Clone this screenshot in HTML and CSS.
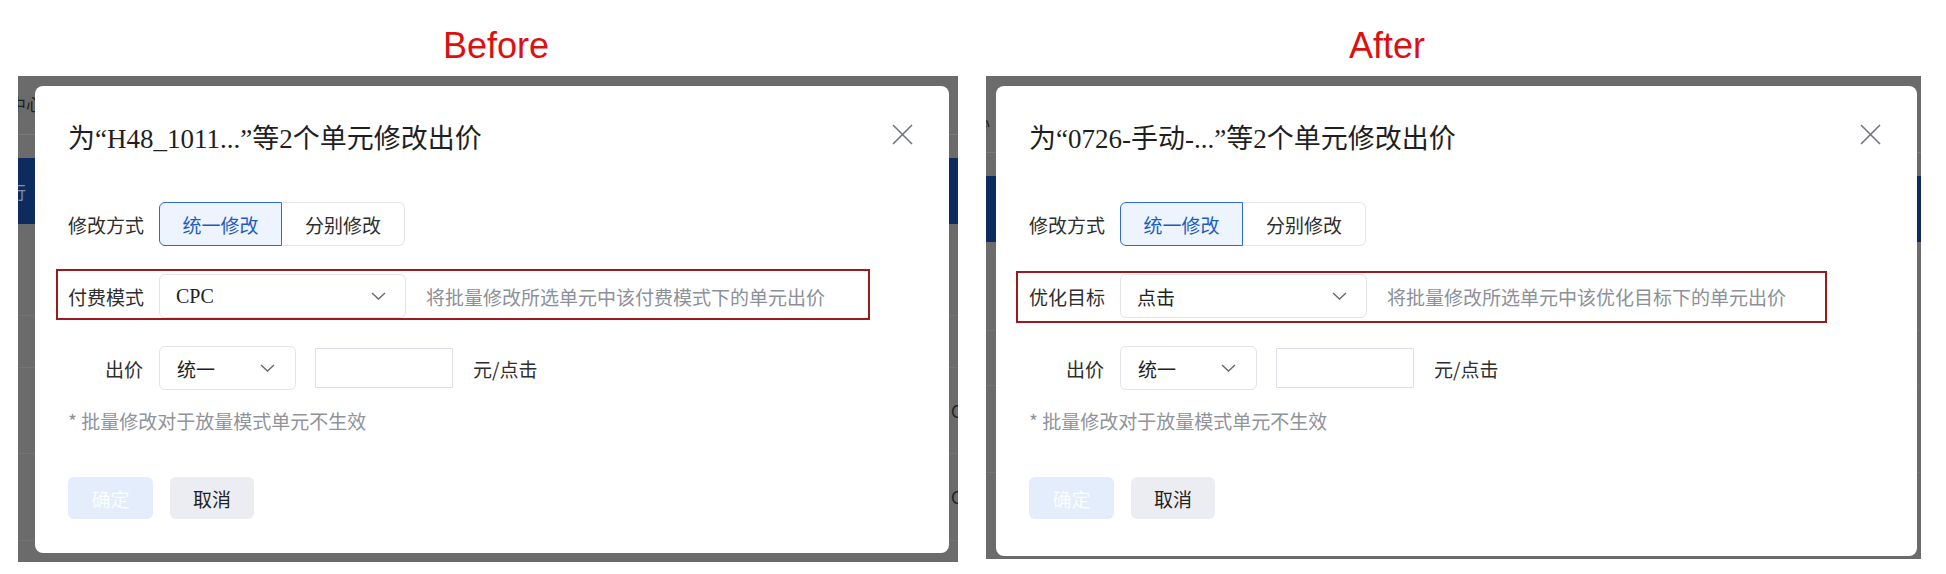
FILE: index.html
```html
<!DOCTYPE html>
<html lang="zh-CN">
<head>
  <meta charset="UTF-8" />
  <meta name="viewport" content="width=device-width, initial-scale=1.0" />
  <title>批量修改出价 – Before / After</title>
  <link rel="stylesheet" href="styles.css">
</head>
<body>
  <main class="compare">
    <section class="panel panel--before">
      <h2 class="panel-title">Before</h2>
      <div class="screen">
        <span class="ghost ghost--nav">中心</span>
        <span class="ghost ghost--menu">行</span>
        <span class="ghost ghost--cell-a">C</span>
        <span class="ghost ghost--cell-b">C</span>
        <div class="dialog">
          <div class="dialog-head">
            <h3 class="dialog-title">为“H48_1011...”等2个单元修改出价</h3>
            <button class="dialog-close" aria-label="关闭">
              <svg width="21" height="21" viewBox="0 0 21 21"><path d="M1 1L20 20M20 1L1 20" stroke="#6f747b" stroke-width="1.6" fill="none"/></svg>
            </button>
          </div>

          <div class="form-row">
            <label class="form-label">修改方式</label>
            <div class="segmented">
              <button class="seg is-active">统一修改</button>
              <button class="seg">分别修改</button>
            </div>
          </div>

          <div class="form-row form-row--marked">
            <label class="form-label">付费模式</label>
            <div class="select select--wide">
              <span class="select-value latin">CPC</span>
              <svg class="chevron" width="15" height="8" viewBox="0 0 15 8"><path d="M1 1L7.5 7L14 1" stroke="#666a70" stroke-width="1.4" fill="none"/></svg>
            </div>
            <span class="form-hint">将批量修改所选单元中该付费模式下的单元出价</span>
          </div>

          <div class="form-row">
            <label class="form-label">出价</label>
            <div class="select select--narrow">
              <span class="select-value">统一</span>
              <svg class="chevron" width="15" height="8" viewBox="0 0 15 8"><path d="M1 1L7.5 7L14 1" stroke="#666a70" stroke-width="1.4" fill="none"/></svg>
            </div>
            <input class="bid-input" type="text" />
            <span class="unit">元/点击</span>
          </div>

          <p class="form-note">* 批量修改对于放量模式单元不生效</p>

          <div class="dialog-actions">
            <button class="btn btn--primary" disabled>确定</button>
            <button class="btn">取消</button>
          </div>
        </div>
      </div>
    </section>

    <section class="panel panel--after">
      <h2 class="panel-title">After</h2>
      <div class="screen">
        <span class="ghost ghost--nav">心</span>
        <div class="dialog">
          <div class="dialog-head">
            <h3 class="dialog-title">为“0726-手动-...”等2个单元修改出价</h3>
            <button class="dialog-close" aria-label="关闭">
              <svg width="21" height="21" viewBox="0 0 21 21"><path d="M1 1L20 20M20 1L1 20" stroke="#6f747b" stroke-width="1.6" fill="none"/></svg>
            </button>
          </div>

          <div class="form-row">
            <label class="form-label">修改方式</label>
            <div class="segmented">
              <button class="seg is-active">统一修改</button>
              <button class="seg">分别修改</button>
            </div>
          </div>

          <div class="form-row form-row--marked">
            <label class="form-label">优化目标</label>
            <div class="select select--wide">
              <span class="select-value">点击</span>
              <svg class="chevron" width="15" height="8" viewBox="0 0 15 8"><path d="M1 1L7.5 7L14 1" stroke="#666a70" stroke-width="1.4" fill="none"/></svg>
            </div>
            <span class="form-hint">将批量修改所选单元中该优化目标下的单元出价</span>
          </div>

          <div class="form-row">
            <label class="form-label">出价</label>
            <div class="select select--narrow">
              <span class="select-value">统一</span>
              <svg class="chevron" width="15" height="8" viewBox="0 0 15 8"><path d="M1 1L7.5 7L14 1" stroke="#666a70" stroke-width="1.4" fill="none"/></svg>
            </div>
            <input class="bid-input" type="text" />
            <span class="unit">元/点击</span>
          </div>

          <p class="form-note">* 批量修改对于放量模式单元不生效</p>

          <div class="dialog-actions">
            <button class="btn btn--primary" disabled>确定</button>
            <button class="btn">取消</button>
          </div>
        </div>
      </div>
    </section>
  </main>
</body>
</html>
```

FILE: styles.css
```css
* {
  margin: 0;
  padding: 0;
  box-sizing: border-box;
}

body {
  background: #fff;
  color: #333;
  font-family: "Noto Sans CJK SC", "Noto Sans", sans-serif;
  font-size: 19px;
}

button,
input {
  font: inherit;
}

.compare {
  display: flex;
  gap: 28px;
  padding-left: 18px;
}

.panel--before {
  width: 940px;
}

.panel--after {
  width: 935px;
}

.panel-title {
  height: 76px;
  padding-top: 28px;
  font-family: "Liberation Sans", Arial, sans-serif;
  font-size: 36px;
  font-weight: normal;
  line-height: 36px;
  color: #dd1010;
}

.panel--before .panel-title {
  padding-left: 425px;
}

.panel--after .panel-title {
  padding-left: 363px;
}

/* greyed page behind the dialog */
.screen {
  position: relative;
  overflow: hidden;
  display: flex;
}

.panel--before .screen {
  height: 486px;
  padding: 10px 9px 9px 17px;
  background:
    linear-gradient(#0d2b5e, #0d2b5e) 0 82px / 100% 66px no-repeat,
    linear-gradient(#7a7a7a, #7a7a7a) 0 58px / 100% 1px no-repeat,
    linear-gradient(#747474, #747474) 0 239px / 100% 1px no-repeat,
    linear-gradient(#747474, #747474) 0 291px / 100% 1px no-repeat,
    linear-gradient(#747474, #747474) 0 377px / 100% 1px no-repeat,
    linear-gradient(#747474, #747474) 0 464px / 100% 1px no-repeat,
    #6b6b6b;
}

.panel--after .screen {
  height: 483px;
  padding: 10px 4px 3px 10px;
  background:
    linear-gradient(#0d2b5e, #0d2b5e) 0 100px / 100% 66px no-repeat,
    linear-gradient(#7a7a7a, #7a7a7a) 0 76px / 100% 1px no-repeat,
    linear-gradient(#747474, #747474) 0 254px / 100% 1px no-repeat,
    linear-gradient(#747474, #747474) 0 309px / 100% 1px no-repeat,
    linear-gradient(#747474, #747474) 0 396px / 100% 1px no-repeat,
    #6b6b6b;
}

.ghost {
  position: absolute;
  font-size: 17px;
  line-height: 20px;
  color: #1e1e1e;
}

.panel--before .ghost--nav {
  top: 18px;
  left: -9px;
}

.panel--after .ghost--nav {
  top: 36px;
  left: -13px;
}

.ghost--menu {
  top: 106px;
  left: -9px;
  color: #8591aa;
}

.ghost--cell-a {
  top: 325px;
  left: 933px;
}

.ghost--cell-b {
  top: 411px;
  left: 933px;
}

/* dialog */
.dialog {
  position: relative;
  z-index: 1;
  flex: 1;
  background: #fff;
  border-radius: 8px;
  padding: 35px 36px 34px 33px;
}

.dialog-head {
  display: flex;
  justify-content: space-between;
  align-items: flex-start;
}

.dialog-title {
  font-family: "Liberation Serif", "Noto Sans CJK SC", serif;
  font-size: 27px;
  font-weight: normal;
  line-height: 36px;
  color: #1f1f1f;
}

.dialog-close {
  margin-top: 3px;
  width: 21px;
  height: 21px;
  border: none;
  background: none;
  display: flex;
}

.form-row {
  position: relative;
  display: flex;
  align-items: center;
  height: 44px;
  margin-top: 28px;
}

.dialog-head + .form-row {
  margin-top: 45px;
}

/* annotation box drawn over the row */
.form-row--marked::after {
  content: "";
  position: absolute;
  top: -5px;
  bottom: -2px;
  left: -12px;
  width: 810px;
  border: 2px solid #9c1a1e;
  pointer-events: none;
}

.panel--after .form-row--marked::after {
  top: -3px;
  bottom: -5px;
  left: -13px;
  width: 807px;
}

.form-label {
  width: 75px;
  margin-right: 16px;
  text-align: right;
  color: #2e2e2e;
  white-space: nowrap;
}

.segmented {
  display: flex;
  height: 44px;
}

.seg {
  width: 123px;
  height: 44px;
  background: #fff;
  color: #2e2e2e;
  border: 1px solid #e2e5ea;
  border-left: none;
  border-radius: 0 6px 6px 0;
}

.seg.is-active {
  background: #eef4fe;
  color: #1d5cc2;
  border: 1.5px solid #3069cf;
  border-radius: 6px 0 0 6px;
}

.select {
  display: flex;
  align-items: center;
  justify-content: space-between;
  height: 44px;
  border: 1px solid #e0e3e8;
  border-radius: 6px;
  color: #222;
}

.select--wide {
  width: 247px;
  padding: 0 19px 0 16px;
}

.select--narrow {
  width: 137px;
  padding: 0 20px 0 17px;
}

.latin {
  font-family: "Liberation Serif", serif;
  font-size: 20px;
}

.form-hint {
  margin-left: 20px;
  color: #8c9099;
}

.bid-input {
  width: 138px;
  height: 40px;
  margin-left: 19px;
  border: 1.5px solid #dcdfe4;
  border-radius: 1px;
  outline: none;
}

.unit {
  margin-left: 20px;
  color: #2e2e2e;
}

.form-note {
  margin-top: 18px;
  line-height: 26px;
  color: #8f939a;
}

.dialog-actions {
  display: flex;
  gap: 17px;
  margin-top: 43px;
}

.btn {
  width: 84px;
  height: 42px;
  border: none;
  border-radius: 6px;
  background: #ebedf2;
  color: #1f1f1f;
}

.btn--primary {
  width: 85px;
  background: #e3edfc;
  color: #fbfdff;
}
```
